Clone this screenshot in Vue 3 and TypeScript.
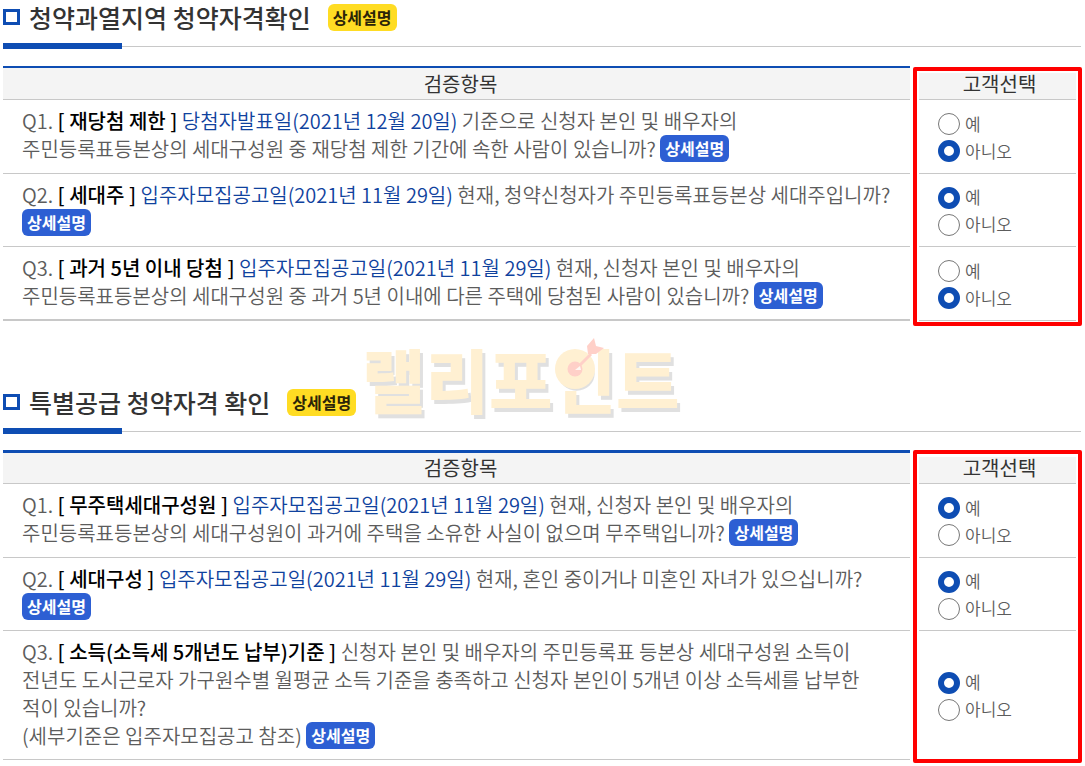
<script setup lang="ts">
import { reactive } from 'vue'

type Answer = 'yes' | 'no'

interface Question {
  id: string
  topic: string
  date?: string
  lines: string[]
  answer: Answer
}

interface Section {
  id: string
  title: string
  watermark: boolean
  questions: Question[]
}

const sections = reactive<Section[]>([
  {
    id: 'area',
    title: '청약과열지역 청약자격확인',
    watermark: false,
    questions: [
      {
        id: 'Q1',
        topic: '재당첨 제한',
        date: '당첨자발표일(2021년 12월 20일)',
        lines: ['기준으로 신청자 본인 및 배우자의 주민등록표등본상의 세대구성원 중 재당첨 제한 기간에 속한 사람이 있습니까?'],
        answer: 'no',
      },
      {
        id: 'Q2',
        topic: '세대주',
        date: '입주자모집공고일(2021년 11월 29일)',
        lines: ['현재, 청약신청자가 주민등록표등본상 세대주입니까?'],
        answer: 'yes',
      },
      {
        id: 'Q3',
        topic: '과거 5년 이내 당첨',
        date: '입주자모집공고일(2021년 11월 29일)',
        lines: ['현재, 신청자 본인 및 배우자의 주민등록표등본상의 세대구성원 중 과거 5년 이내에 다른 주택에 당첨된 사람이 있습니까?'],
        answer: 'no',
      },
    ],
  },
  {
    id: 'special',
    title: '특별공급 청약자격 확인',
    watermark: true,
    questions: [
      {
        id: 'Q1',
        topic: '무주택세대구성원',
        date: '입주자모집공고일(2021년 11월 29일)',
        lines: ['현재, 신청자 본인 및 배우자의 주민등록표등본상의 세대구성원이 과거에 주택을 소유한 사실이 없으며 무주택입니까?'],
        answer: 'yes',
      },
      {
        id: 'Q2',
        topic: '세대구성',
        date: '입주자모집공고일(2021년 11월 29일)',
        lines: ['현재, 혼인 중이거나 미혼인 자녀가 있으십니까?'],
        answer: 'yes',
      },
      {
        id: 'Q3',
        topic: '소득(소득세 5개년도 납부)기준',
        lines: [
          '신청자 본인 및 배우자의 주민등록표 등본상 세대구성원 소득이 전년도 도시근로자 가구원수별 월평균 소득 기준을 충족하고 신청자 본인이 5개년 이상 소득세를 납부한 적이 있습니까?',
          '(세부기준은 입주자모집공고 참조)',
        ],
        answer: 'yes',
      },
    ],
  },
])

const options: { value: Answer; label: string }[] = [
  { value: 'yes', label: '예' },
  { value: 'no', label: '아니오' },
]
</script>

<template>
  <main class="page">
    <section v-for="s in sections" :key="s.id" class="section" :class="s.id">
      <header class="head">
        <h2 class="title">{{ s.title }}</h2>
        <button type="button" class="badge yellow">상세설명</button>
        <div v-if="s.watermark" class="watermark" aria-hidden="true">
          <span class="mark-text">랠리포인트</span>
          <svg class="dart" width="52" height="54" viewBox="0 0 52 54">
            <circle cx="20" cy="32" r="20" fill="#fff0d2" />
            <circle cx="20" cy="32" r="7.5" fill="#ffd0c8" />
            <path d="M20 33 L36 17" stroke="#ffd0c8" stroke-width="3" />
            <path d="M20 33 L25 29 L26 33 Z" fill="#fff8f4" />
            <path d="M32 9 L39 1 L41 9 L49 11 L41 17 L33 17 Z" fill="#ffd0c8" />
          </svg>
        </div>
      </header>
      <div class="rule"></div>

      <div class="sheet">
        <table class="grid">
          <colgroup>
            <col />
            <col class="choice-col" />
          </colgroup>
          <thead>
            <tr>
              <th scope="col" class="item-head">검증항목</th>
              <th scope="col" class="choice-head">고객선택</th>
            </tr>
          </thead>
          <tbody>
            <tr v-for="q in s.questions" :key="q.id">
              <td class="item">
                {{ q.id }}. <strong>[ {{ q.topic }} ]</strong> <span v-if="q.date" class="date">{{ q.date + ' ' }}</span><template v-for="(line, i) in q.lines" :key="i"><br v-if="i > 0" />{{ line }}</template> <button type="button" class="badge blue">상세설명</button>
              </td>
              <td class="choice">
                <div role="radiogroup" :aria-label="q.topic">
                  <label v-for="o in options" :key="o.value" class="option">
                    <input v-model="q.answer" type="radio" :name="s.id + q.id" :value="o.value" />
                    <span>{{ o.label }}</span>
                  </label>
                </div>
              </td>
            </tr>
          </tbody>
        </table>
        <div class="frame"></div>
      </div>
    </section>
  </main>
</template>

<style>
body {
  margin: 0;
  background: #fff;
}
</style>

<style scoped>
.page {
  padding: 0 4px 6px 3px;
  font-family: "Noto Sans CJK KR", "Noto Sans", sans-serif;
  color: #5c5c5c;
  word-break: keep-all;
}

.section + .section {
  margin-top: 64px;
}

.head {
  position: relative;
  display: flex;
  align-items: center;
  height: 34px;
  margin-bottom: 9px;
}

.head::before {
  content: "";
  box-sizing: border-box;
  width: 17px;
  height: 16px;
  margin-right: 9px;
  border: 3px solid #0e4db3;
}

.title {
  margin: 0 17px 0 0;
  font-size: 25px;
  line-height: 34px;
  font-weight: 500;
  color: #333;
}

.badge {
  padding: 0 5px;
  border: 0;
  border-radius: 6px;
  font-family: inherit;
  font-size: 16px;
  line-height: 27px;
  font-weight: 700;
  cursor: pointer;
}

.yellow {
  background: #ffdc23;
  color: #2b2408;
}

.blue {
  vertical-align: top;
  background: #2d5fd3;
  color: #fff;
}

.rule {
  height: 6px;
  background:
    linear-gradient(#0e4db3, #0e4db3) 0 0 / 119px 6px no-repeat,
    linear-gradient(#c8c8c8, #c8c8c8) 0 3px / 100% 1px no-repeat;
}

.sheet {
  position: relative;
  margin: 17px 5px 0 0;
}

.special .sheet {
  margin-top: 16px;
}

.grid {
  width: calc(100% + 18px);
  margin: 0 -9px;
  table-layout: fixed;
  border-collapse: separate;
  border-spacing: 9px 0;
}

.choice-col {
  width: 157px;
}

th {
  box-sizing: border-box;
  height: 34px;
  padding: 0 0 0 8px;
  border-bottom: 1px solid #c8c8c8;
  background: #f4f4f4;
  font-size: 20px;
  line-height: 26px;
  font-weight: 400;
  color: #333;
}

.item-head {
  border-top: 2px solid #0e4db3;
}

.special .item-head {
  border-top-width: 3px;
}

.choice-head {
  padding-left: 4px;
  border-top: 7px solid #fff;
  line-height: 22px;
  vertical-align: top;
}

td {
  border-bottom: 1px solid #c8c8c8;
}

.item {
  padding: 7px 19px 9px;
  font-size: 20px;
  line-height: 28px;
  font-weight: 350;
}

tr:first-child .item {
  padding-bottom: 10px;
}

.area tr:last-child .item {
  border-bottom-width: 2px;
}

.item strong {
  font-weight: 500;
  color: #000;
}

.date {
  color: #0f429e;
}

.choice {
  padding: 2px 0 0 19px;
}

.option {
  display: flex;
  align-items: center;
  gap: 5px;
  height: 27px;
  font-size: 17px;
  line-height: 25px;
  font-weight: 350;
}

.option span {
  padding-bottom: 2px;
}

.option input {
  appearance: none;
  box-sizing: border-box;
  width: 22px;
  height: 22px;
  margin: 0;
  border: 1px solid #777;
  border-radius: 50%;
  background: #fff;
}

.option input:checked {
  border: 6px solid #0e4db3;
}

.frame {
  position: absolute;
  top: 1px;
  right: -6px;
  bottom: -5px;
  box-sizing: border-box;
  width: 169px;
  border: 4px solid #f00;
  border-radius: 2px;
  pointer-events: none;
}

.special .frame {
  top: 0;
  bottom: -3px;
}

.watermark {
  position: absolute;
  top: -57px;
  left: 359px;
  pointer-events: none;
}

.mark-text {
  display: block;
  font-size: 69px;
  line-height: 100px;
  font-weight: 900;
  color: #fff0d2;
  text-shadow: 3px 4px 0 #e0e0e0;
  white-space: nowrap;
}

.dart {
  position: absolute;
  top: 9px;
  left: 193px;
}
</style>
